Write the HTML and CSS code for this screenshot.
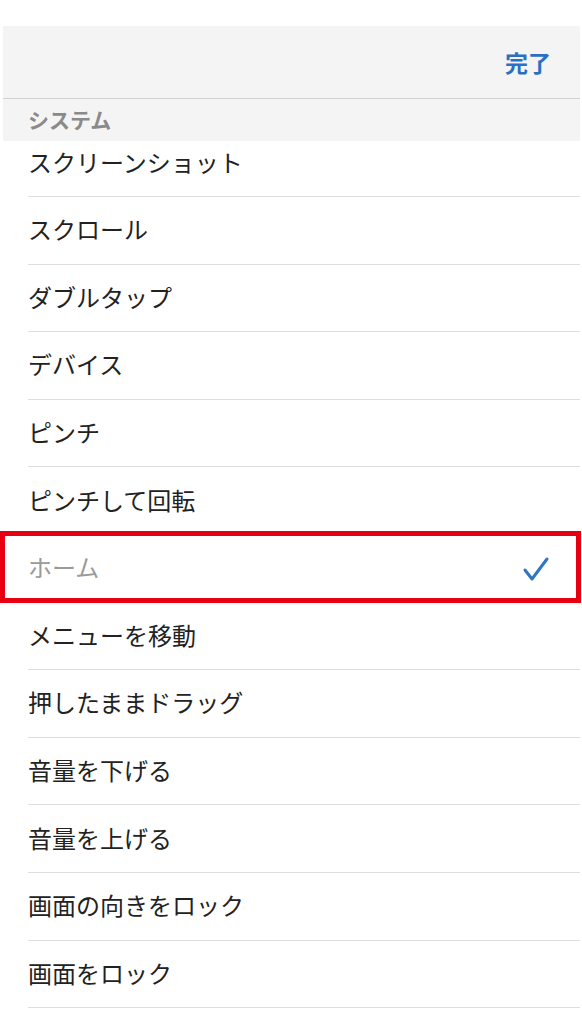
FILE: index.html
```html
<!DOCTYPE html>
<html lang="ja">
<head>
<meta charset="utf-8">
<link rel="stylesheet" href="styles.css">
</head>
<body>
<div class="screen">
  <div class="top-space"></div>
  <div class="navbar"><span class="done">完了</span></div>
  <div class="section-header">システム</div>
  <ul class="list">
    <li class="row first">スクリーンショット</li>
    <li class="row">スクロール</li>
    <li class="row">ダブルタップ</li>
    <li class="row">デバイス</li>
    <li class="row">ピンチ</li>
    <li class="row">ピンチして回転</li>
    <li class="row selected"><span class="muted">ホーム</span>
      <svg class="check" width="28" height="26" viewBox="0 0 28 26"><polyline points="3,14 10,23 25,3" fill="none" stroke="#2f74c6" stroke-width="3" stroke-linecap="round" stroke-linejoin="round"/></svg>
    </li>
    <li class="row">メニューを移動</li>
    <li class="row">押したままドラッグ</li>
    <li class="row">音量を下げる</li>
    <li class="row">音量を上げる</li>
    <li class="row">画面の向きをロック</li>
    <li class="row">画面をロック</li>
  </ul>
</div>
</body>
</html>
```

FILE: styles.css
```css
html, body {
  margin: 0;
  padding: 0;
  background: #ffffff;
}
body {
  font-family: "Noto Sans CJK JP", "Noto Sans", sans-serif;
  width: 582px;
  height: 1024px;
  overflow: hidden;
}
.screen {
  display: flex;
  flex-direction: column;
}
.top-space {
  height: 26px;
}
.navbar {
  height: 72px;
  margin: 0 2px 0 3px;
  background: #f4f4f4;
  border-bottom: 1px solid #d2d2d2;
  display: flex;
  align-items: center;
  justify-content: flex-end;
  padding-right: 29px;
}
.done {
  color: #2a6fc4;
  font-size: 23px;
  font-weight: 700;
  line-height: 1;
}
.section-header {
  height: 42px;
  margin: 0 2px 0 3px;
  background: #f4f4f4;
  display: flex;
  align-items: center;
  padding-left: 25px;
  padding-bottom: 2px;
  box-sizing: border-box;
  color: #8a8a8a;
  font-size: 21px;
  font-weight: 700;
}
.list {
  list-style: none;
  margin: 0 2px 0 28px;
  padding: 0;
}
.row {
  position: relative;
  box-sizing: border-box;
  height: 67.6px;
  padding-bottom: 3px;
  border-bottom: 1px solid #dedede;
  display: flex;
  align-items: center;
  justify-content: space-between;
  font-size: 24px;
  color: #222222;
}
.row.first {
  height: 56px;
  padding-bottom: 15px;
}
.muted {
  color: #9a9a9a;
}
.check {
  margin-right: 30px;
  margin-top: 4px;
}
.selected::after {
  content: "";
  position: absolute;
  left: -28px;
  right: -1px;
  top: -4px;
  bottom: -1px;
  border: 5px solid #e60012;
}
```
